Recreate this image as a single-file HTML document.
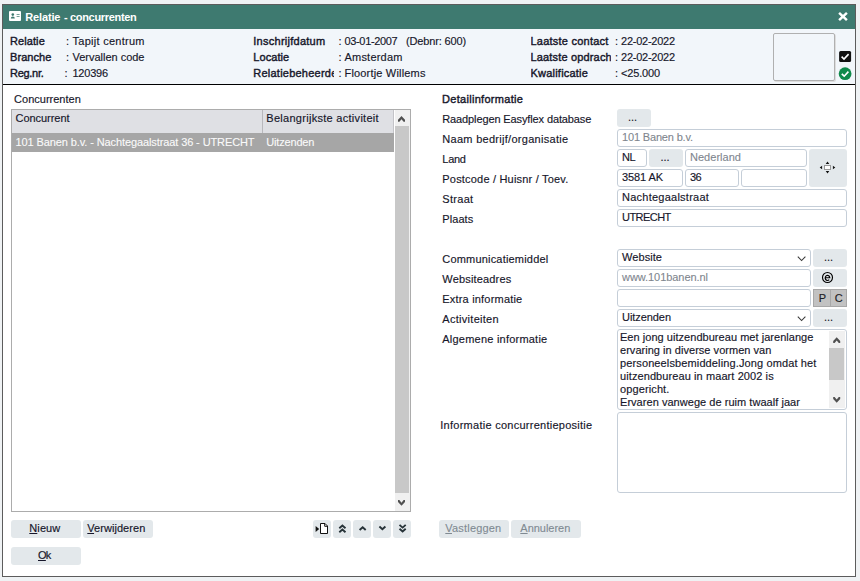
<!DOCTYPE html>
<html lang="nl"><head><meta charset="utf-8"><title>Relatie - concurrenten</title>
<style>
html,body{margin:0;padding:0}
body{width:860px;height:581px;overflow:hidden;background:#eff2f4;position:relative;font-family:"Liberation Sans",sans-serif;font-size:11px;color:#16162a}
.a{position:absolute;box-sizing:border-box}
.t{position:absolute;white-space:pre;line-height:14px;height:14px;font-size:11px;color:#16162a;-webkit-text-stroke:0.15px #16162a}
.t.b{font-weight:700}
.t.m{-webkit-text-stroke:0.4px #16162a}
.t.m2{-webkit-text-stroke:0.15px #16162a}
.t.w{color:#fff;-webkit-text-stroke:0}
.t.sel{color:#fafafa;-webkit-text-stroke:0.1px #fafafa}
.t.dis{color:#80868e;-webkit-text-stroke:0.1px #80868e}
.t.gr{color:#808a92;-webkit-text-stroke:0.1px #808a92}
.t.pc{color:#222}
.t u{text-decoration:underline;text-underline-offset:1px}
.in{position:absolute;box-sizing:border-box;height:18px;border:1px solid #c5ced8;border-radius:3px;background:#fff}
.btn{position:absolute;box-sizing:border-box;height:18px;border-radius:3px;background:#e3e8eb}
svg{position:absolute;overflow:visible}
.t.t12{font-size:12px}
.t.tm{-webkit-text-stroke:0.45px #fff}

</style></head>
<body>
<div class="a" style="left:2px;top:4px;width:854px;height:573px;border:1px solid #5c5c5c;background:#fff"></div>
<div class="a" style="left:3px;top:5px;width:852px;height:24px;background:#3e7a70"></div>
<div class="a" style="left:3px;top:29px;width:852px;height:55px;background:#f2f6fa"></div>
<div class="a" style="left:3px;top:84px;width:852px;height:1px;background:#000"></div>
<!-- title icon -->
<svg style="left:9px;top:11px" width="12" height="10" viewBox="0 0 12 10"><rect x="0" y="0" width="12" height="10" rx="1" fill="#fff"/><circle cx="3.8" cy="3.6" r="1.3" fill="#3e7a70"/><path d="M1.8 7.6 q0-2 2-2 q2 0 2 2z" fill="#3e7a70"/><rect x="7.6" y="3" width="3" height="1" fill="#3e7a70" opacity=".7"/><rect x="7.6" y="5" width="3" height="1" fill="#3e7a70" opacity=".7"/></svg>
<!-- close -->
<svg style="left:838px;top:12px" width="10" height="9" viewBox="0 0 10 9"><path d="M1.1 0.9 L8.9 8.1 M8.9 0.9 L1.1 8.1" stroke="#fff" stroke-width="2.5"/></svg>
<!-- picture box -->
<div class="a" style="left:773px;top:33px;width:62px;height:48px;border:1px solid #b0b0b0;border-radius:2px;background:#f2f6fa;box-shadow:1px 1px 0 #ddd"></div>
<!-- checkbox -->
<svg style="left:839px;top:51px" width="13" height="12" viewBox="0 0 13 12"><rect x="0.1" y="0.1" width="12" height="11" rx="1.5" fill="#111"/><path d="M2.6 5.6 L5 8 L9.6 3.1" stroke="#fff" stroke-width="1.6" fill="none"/></svg>
<svg style="left:838px;top:67px" width="14" height="14" viewBox="0 0 14 14"><circle cx="7.1" cy="6.7" r="6.4" fill="#0f8a4a"/><path d="M3.8 6.9 L6.2 9.2 L10.4 4.6" stroke="#fff" stroke-width="1.6" fill="none"/></svg>
<!-- table -->
<div class="a" style="left:11px;top:109px;width:400px;height:403px;border:1px solid #acacac;background:#fff"></div>
<div class="a" style="left:12px;top:110px;width:382px;height:23px;background:#dfe0e4"></div>
<div class="a" style="left:262px;top:110px;width:1px;height:23px;background:#b8b8bc"></div>
<div class="a" style="left:12px;top:133px;width:382px;height:19px;background:#a6a6a6"></div>
<div class="a" style="left:393px;top:110px;width:1px;height:23px;background:#c4c4c8"></div>
<div class="a" style="left:395px;top:110px;width:15px;height:401px;background:#f0f0f0"></div>
<div class="a" style="left:395px;top:126px;width:14px;height:367px;background:#c8c8c8"></div>
<svg style="left:401px;top:119px" width="1" height="1"><g transform="translate(0.50 0.00)"><path d="M0 -2.9 L3.5 0.8 L3.5 2.8 L2.1 2.8 L0 0.2 L-2.1 2.8 L-3.5 2.8 L-3.5 0.8z" fill="#505050"/></g></svg>
<svg style="left:401px;top:502px" width="1" height="1"><g transform="translate(0.50 0.90)"><path d="M0 2.9 L3.5 -0.8 L3.5 -2.8 L2.1 -2.8 L0 -0.2 L-2.1 -2.8 L-3.5 -2.8 L-3.5 -0.8z" fill="#505050"/></g></svg>
<!-- left buttons -->
<div class="btn" style="left:11px;top:520px;width:70px"></div>
<div class="btn" style="left:83px;top:520px;width:70px"></div>
<div class="btn" style="left:11px;top:547px;width:70px"></div>
<div class="btn" style="left:313px;top:520px;width:18px"></div>
<div class="btn" style="left:333px;top:520px;width:18px"></div>
<div class="btn" style="left:353px;top:520px;width:18px"></div>
<div class="btn" style="left:373px;top:520px;width:18px"></div>
<div class="btn" style="left:393px;top:520px;width:18px"></div>
<svg style="left:313px;top:520px" width="18" height="18" viewBox="0 0 18 18"><path d="M2.6 6 L6.2 9 L2.6 12z" fill="#111"/><path d="M7.5 3.5 H12 L14.5 6 V13.5 H7.5z" fill="#fff" stroke="#111" stroke-width="1"/><path d="M11.7 3.5 V6.3 H14.5" fill="none" stroke="#111" stroke-width="1"/></svg>
<svg style="left:333px;top:520px" width="18" height="18" viewBox="0 0 18 18"><path d="M6.3 8.3 L9.4 5.6 L12.5 8.3 M6.3 12.2 L9.4 9.5 L12.5 12.2" stroke="#263238" stroke-width="1.9" fill="none"/></svg>
<svg style="left:353px;top:520px" width="18" height="18" viewBox="0 0 18 18"><path d="M6.6 10 L9.65 7.2 L12.7 10" stroke="#263238" stroke-width="1.9" fill="none"/></svg>
<svg style="left:373px;top:520px" width="18" height="18" viewBox="0 0 18 18"><path d="M6.4 6.5 L9.4 9.2 L12.4 6.5" stroke="#263238" stroke-width="1.9" fill="none"/></svg>
<svg style="left:393px;top:520px" width="18" height="18" viewBox="0 0 18 18"><path d="M6.5 4.9 L9.6 7.6 L12.7 4.9 M6.5 8.8 L9.6 11.5 L12.7 8.8" stroke="#263238" stroke-width="1.9" fill="none"/></svg>
<!-- right buttons -->
<div class="btn" style="left:439px;top:520px;width:70px"></div>
<div class="btn" style="left:511px;top:520px;width:70px"></div>
<!-- form -->
<div class="btn" style="left:617px;top:109px;width:34px"></div>
<div class="in" style="left:617px;top:129px;width:230px"></div>
<div class="in" style="left:617px;top:149px;width:30px"></div>
<div class="btn" style="left:649px;top:149px;width:34px"></div>
<div class="in" style="left:685px;top:149px;width:122px"></div>
<div class="btn" style="left:809px;top:149px;width:38px;height:38px"></div>
<div class="in" style="left:617px;top:169px;width:66px"></div>
<div class="in" style="left:685px;top:169px;width:54px"></div>
<div class="in" style="left:741px;top:169px;width:66px"></div>
<div class="in" style="left:617px;top:189px;width:230px"></div>
<div class="in" style="left:617px;top:209px;width:230px"></div>
<div class="in" style="left:617px;top:249px;width:194px"></div>
<div class="btn" style="left:813px;top:249px;width:34px"></div>
<div class="in" style="left:617px;top:269px;width:194px"></div>
<div class="btn" style="left:813px;top:269px;width:34px"></div>
<div class="in" style="left:617px;top:289px;width:194px"></div>
<div class="a" style="left:813px;top:289px;width:34px;height:18px;background:#c2c2c2;border:1px solid #a8a8a8"></div>
<div class="a" style="left:830px;top:289px;width:1px;height:18px;background:#a8a8a8"></div>
<div class="in" style="left:617px;top:309px;width:194px"></div>
<div class="btn" style="left:813px;top:309px;width:34px"></div>
<div class="in" style="left:617px;top:329px;width:230px;height:81px"></div>
<div class="a" style="left:829px;top:331px;width:16px;height:77px;background:#f0f0f0"></div>
<div class="a" style="left:829px;top:348px;width:15px;height:32px;background:#c8c8c8"></div>
<svg style="left:836px;top:340px" width="1" height="1"><g transform="translate(0.70 0.20)"><path d="M0 -2.9 L3.5 0.8 L3.5 2.8 L2.1 2.8 L0 0.2 L-2.1 2.8 L-3.5 2.8 L-3.5 0.8z" fill="#505050"/></g></svg>
<svg style="left:836px;top:399px" width="1" height="1"><g transform="translate(0.70 0.80)"><path d="M0 2.9 L3.5 -0.8 L3.5 -2.8 L2.1 -2.8 L0 -0.2 L-2.1 -2.8 L-3.5 -2.8 L-3.5 -0.8z" fill="#505050"/></g></svg>
<div class="in" style="left:617px;top:412px;width:230px;height:81px"></div>
<!-- select chevrons -->
<svg style="left:801px;top:258px" width="1" height="1"><g transform="translate(0.60 0.60)"><path d="M-3.8 -2 L0 2 L3.8 -2" stroke="#383838" stroke-width="1.05" fill="none"/></g></svg>
<svg style="left:801px;top:318px" width="1" height="1"><g transform="translate(0.60 0.60)"><path d="M-3.8 -2 L0 2 L3.8 -2" stroke="#383838" stroke-width="1.05" fill="none"/></g></svg>
<!-- move icon -->
<svg style="left:827px;top:167px" width="1" height="1"><g transform="translate(0.50 0.50)"><rect x="-3" y="-2" width="6" height="4" fill="#fff" stroke="#999" stroke-width="1"/><path d="M0 -6 L-1.8 -3.6 H1.8z M0 6 L-1.8 3.6 H1.8z M-7.8 0 L-5.4 -1.8 V1.8z M7.8 0 L5.4 -1.8 V1.8z" fill="#111"/></g></svg>
<!-- web icon -->
<svg style="left:827px;top:277px" width="1" height="1"><g transform="translate(0.50 0.50)"><circle cx="0" cy="0" r="5" fill="none" stroke="#000" stroke-width="1.15"/><path d="M-2.3 0.2 H2.3 A2.3 2.6 0 1 0 1.7 2.2" fill="none" stroke="#000" stroke-width="1.15"/></g></svg>

<span class="t b w" style="left:25.2px;top:10px;letter-spacing:-0.135px;">Relatie</span>
<span class="t b w" style="left:64.0px;top:10px;">-</span>
<span class="t b w" style="left:70.0px;top:10px;letter-spacing:-0.321px;">concurrenten</span>
<span class="t m" style="left:10.1px;top:34px;letter-spacing:0.069px;">Relatie</span>
<span class="t m" style="left:10.1px;top:50px;letter-spacing:0.033px;">Branche</span>
<span class="t m" style="left:10.1px;top:66px;letter-spacing:-0.303px;">Reg.nr.</span>
<span class="t " style="left:66px;top:34px;">:</span>
<span class="t " style="left:72.6px;top:34px;letter-spacing:0.260px;">Tapijt centrum</span>
<span class="t " style="left:66px;top:50px;">:</span>
<span class="t " style="left:72.5px;top:50px;letter-spacing:-0.013px;">Vervallen code</span>
<span class="t " style="left:64.5px;top:66px;">:</span>
<span class="t " style="left:72.4px;top:66px;letter-spacing:-0.203px;">120396</span>
<span class="t m" style="left:253.3px;top:34px;letter-spacing:0.260px;width:81px;overflow:hidden;">Inschrijfdatum</span>
<span class="t m" style="left:253.3px;top:50px;letter-spacing:0.079px;width:81px;overflow:hidden;">Locatie</span>
<span class="t m" style="left:253.3px;top:66px;letter-spacing:0.233px;width:81px;overflow:hidden;">Relatiebeheerder</span>
<span class="t " style="left:338.5px;top:34px;">:</span>
<span class="t " style="left:344.5px;top:34px;letter-spacing:-0.345px;">03-01-2007</span>
<span class="t " style="left:406px;top:34px;letter-spacing:-0.154px;">(Debnr: 600)</span>
<span class="t " style="left:338.5px;top:50px;">:</span>
<span class="t " style="left:344.5px;top:50px;letter-spacing:0.206px;">Amsterdam</span>
<span class="t " style="left:338.5px;top:66px;">:</span>
<span class="t " style="left:344.5px;top:66px;letter-spacing:0.178px;">Floortje Willems</span>
<span class="t m" style="left:530.5px;top:34px;letter-spacing:0.234px;width:80px;overflow:hidden;">Laatste contact</span>
<span class="t m" style="left:530.5px;top:50px;letter-spacing:0.164px;width:80px;overflow:hidden;">Laatste opdracht</span>
<span class="t m" style="left:530.5px;top:66px;letter-spacing:0.215px;width:80px;overflow:hidden;">Kwalificatie</span>
<span class="t " style="left:615px;top:34px;">:</span>
<span class="t " style="left:621px;top:34px;letter-spacing:-0.240px;">22-02-2022</span>
<span class="t " style="left:615px;top:50px;">:</span>
<span class="t " style="left:621px;top:50px;letter-spacing:-0.240px;">22-02-2022</span>
<span class="t " style="left:615px;top:66px;">:</span>
<span class="t " style="left:621px;top:66px;letter-spacing:-0.166px;">&lt;25.000</span>
<span class="t m2" style="left:14.1px;top:92px;letter-spacing:0.004px;">Concurrenten</span>
<span class="t " style="left:15.5px;top:111px;letter-spacing:-0.044px;">Concurrent</span>
<span class="t " style="left:266.3px;top:111px;letter-spacing:0.286px;">Belangrijkste activiteit</span>
<span class="t sel" style="left:15.5px;top:135px;letter-spacing:-0.104px;">101 Banen b.v. - Nachtegaalstraat 36 - UTRECHT</span>
<span class="t sel" style="left:266.3px;top:135px;letter-spacing:-0.182px;">Uitzenden</span>
<span class="t m" style="left:442px;top:92px;letter-spacing:0.295px;">Detailinformatie</span>
<span class="t " style="left:442.3px;top:112px;letter-spacing:-0.119px;">Raadplegen Easyflex database</span>
<span class="t " style="left:442.3px;top:132px;letter-spacing:0.288px;">Naam bedrijf/organisatie</span>
<span class="t " style="left:442.3px;top:152px;letter-spacing:-0.281px;">Land</span>
<span class="t " style="left:442.3px;top:172px;letter-spacing:0.193px;">Postcode / Huisnr / Toev.</span>
<span class="t " style="left:442.3px;top:192px;letter-spacing:0.298px;">Straat</span>
<span class="t " style="left:442.3px;top:212px;letter-spacing:0.077px;">Plaats</span>
<span class="t " style="left:442.3px;top:252px;letter-spacing:0.188px;">Communicatiemiddel</span>
<span class="t " style="left:442.3px;top:272px;letter-spacing:0.168px;">Websiteadres</span>
<span class="t " style="left:442.3px;top:292px;letter-spacing:0.192px;">Extra informatie</span>
<span class="t " style="left:442.3px;top:312px;letter-spacing:0.287px;">Activiteiten</span>
<span class="t " style="left:442.3px;top:332px;letter-spacing:0.222px;">Algemene informatie</span>
<span class="t " style="left:440.3px;top:418px;letter-spacing:0.261px;">Informatie concurrentiepositie</span>
<span class="t dis" style="left:622px;top:130px;letter-spacing:-0.162px;">101 Banen b.v.</span>
<span class="t " style="left:622px;top:150px;letter-spacing:-0.375px;">NL</span>
<span class="t dis" style="left:690px;top:150px;letter-spacing:0.028px;">Nederland</span>
<span class="t " style="left:622px;top:170px;letter-spacing:-0.091px;">3581 AK</span>
<span class="t " style="left:690px;top:170px;letter-spacing:-0.500px;">36</span>
<span class="t " style="left:622px;top:190px;letter-spacing:0.247px;">Nachtegaalstraat</span>
<span class="t " style="left:622px;top:210px;letter-spacing:-0.548px;">UTRECHT</span>
<span class="t " style="left:622px;top:250px;letter-spacing:0.070px;">Website</span>
<span class="t dis" style="left:622px;top:270px;letter-spacing:-0.058px;">www.101banen.nl</span>
<span class="t " style="left:622px;top:310px;letter-spacing:-0.064px;">Uitzenden</span>
<span class="t " style="left:620px;top:330px;letter-spacing:0.038px;">Een jong uitzendbureau met jarenlange</span>
<span class="t " style="left:620px;top:343px;letter-spacing:0.034px;">ervaring in diverse vormen van</span>
<span class="t " style="left:620px;top:356px;letter-spacing:0.123px;">personeelsbemiddeling.Jong omdat het</span>
<span class="t " style="left:620px;top:369px;letter-spacing:0.090px;">uitzendbureau in maart 2002 is</span>
<span class="t " style="left:620px;top:382px;letter-spacing:0.114px;">opgericht.</span>
<span class="t " style="left:620px;top:395px;letter-spacing:0.040px;">Ervaren vanwege de ruim twaalf jaar</span>
<span class="t " style="left:628px;top:110px;">...</span>
<span class="t " style="left:660.5px;top:150px;">...</span>
<span class="t " style="left:824px;top:250px;">...</span>
<span class="t " style="left:824px;top:310px;">...</span>
<span class="t pc" style="left:818.8px;top:290.5px;">P</span>
<span class="t pc" style="left:834.8px;top:290.5px;">C</span>
<span class="t " style="left:29.3px;top:521px;letter-spacing:0.094px;"><u>N</u>ieuw</span>
<span class="t " style="left:87.3px;top:521px;letter-spacing:0.049px;"><u>V</u>erwijderen</span>
<span class="t " style="left:38px;top:548px;letter-spacing:-0.708px;"><u>O</u>k</span>
<span class="t gr" style="left:445.3px;top:521px;letter-spacing:0.186px;"><u>V</u>astleggen</span>
<span class="t gr" style="left:520.3px;top:521px;letter-spacing:-0.018px;"><u>A</u>nnuleren</span>
</body></html>
